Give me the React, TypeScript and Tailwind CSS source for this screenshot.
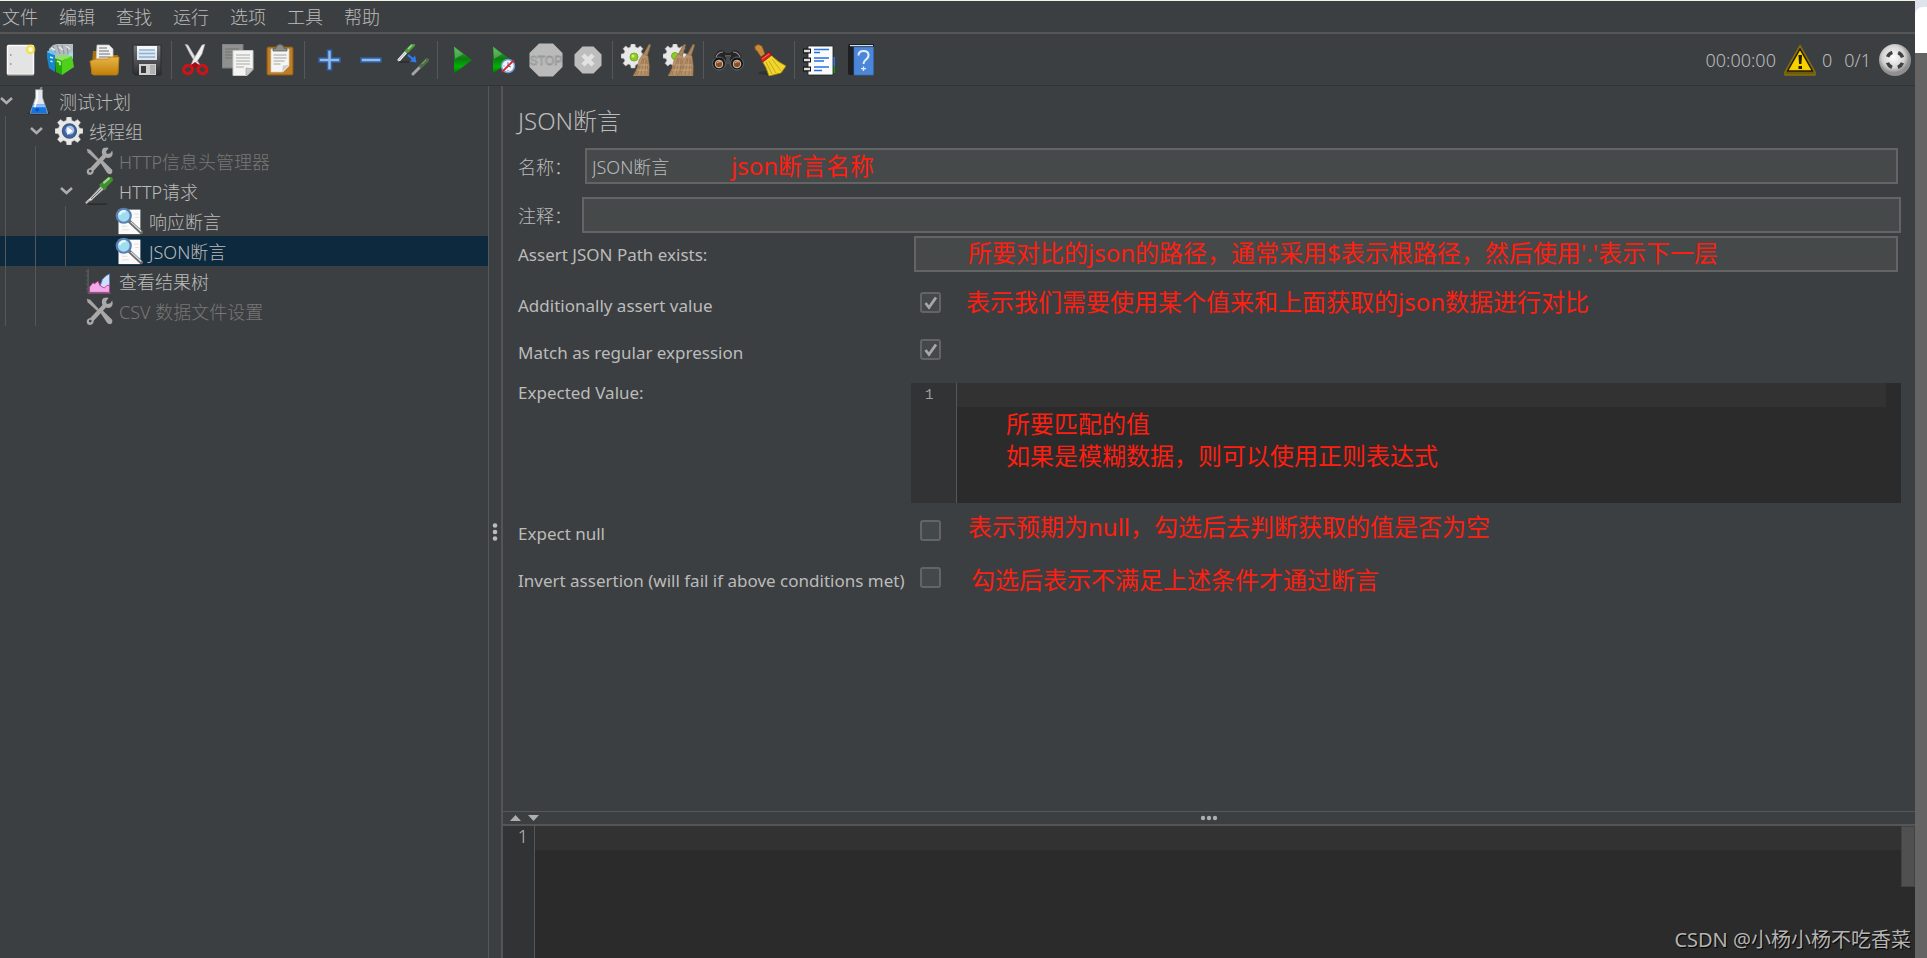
import { useState, type ReactNode } from "react";
import clsx from "clsx";

const menus = ["文件", "编辑", "查找", "运行", "选项", "工具", "帮助"];

function Svg({ size = 32, children }: { size?: number; children: ReactNode }) {
  return (
    <svg width={size} height={size} viewBox="0 0 32 32" fill="none" aria-hidden="true" className="shrink-0">
      {children}
    </svg>
  );
}

function NewIcon() {
  return (
    <Svg>
      <defs>
        <radialGradient id="glow">
          <stop offset="0" stopColor="#fffef0" />
          <stop offset="0.35" stopColor="#fff9b0" />
          <stop offset="0.6" stopColor="#f0dc3c" />
          <stop offset="1" stopColor="#f0dc3c" stopOpacity="0" />
        </radialGradient>
      </defs>
      <rect x="2.5" y="1.500" width="26" height="29" rx="1" fill="#e4e4e4" stroke="#fafafa" strokeWidth="1.500" />
      <path d="M2 31h27" stroke="#8a8a84" />
      <path d="M5 11h1.500M5 20h1.500" stroke="#8c8c8c" strokeWidth="1.500" />
      <circle cx="25.500" cy="5.500" r="5.500" fill="url(#glow)" />
    </Svg>
  );
}

function TemplatesIcon() {
  return (
    <Svg>
      <path d="M2 5l4-4 4-1h16v15H3z" fill="#b4bdc1" />
      <path d="M6 2l3 8M10 1l3 9M15 1l2 9M20 1l1 9" stroke="#8f999e" strokeWidth="1.200" />
      <path d="M4 4l4 2M12 3l4 3M19 2l4 3" stroke="#e4eaec" strokeWidth="1.500" />
      <path d="M22 9l4-1v6l-4 1z" fill="#a9d7ec" />
      <path d="M-1 8l9 3v17l-6-4z" fill="#1587cf" />
      <path d="M-1 8l4-2 7 3-2 2z" fill="#6fc4f0" />
      <path d="M3 13l3 1M3.500 17l2 .8" stroke="#d5efff" strokeWidth="1.400" />
      <path d="M8 14l7 3v14l-6-3z" fill="#27a80a" />
      <path d="M8 14l7-3 10 1-10 5z" fill="#8be45c" />
      <path d="M15 17l10-5 2 11-12 8z" fill="#4fd01c" />
      <path d="M10 17l3 1.200v3" stroke="#d3f8c2" strokeWidth="1.500" />
    </Svg>
  );
}

function OpenIcon() {
  return (
    <Svg>
      <defs>
        <linearGradient id="folder" x1="0" y1="0" x2="0" y2="1">
          <stop offset="0" stopColor="#e9b545" />
          <stop offset="1" stopColor="#c07f08" />
        </linearGradient>
      </defs>
      <path d="M4 7h6l1 4h18l1 7-1 12H2z" fill="#a8700d" />
      <path d="M8 1h12l4 4v13H7z" fill="#f2f2f2" stroke="#c6c6c6" strokeWidth=".7" />
      <path d="M10 4h8M10 7h10M10 10h11M10 13h11" stroke="#9c9c9c" strokeWidth="1.400" />
      <path d="M1 17l6-2h12l2-2h9l-1 16q0 2-2 2H5q-2 0-2-2z" fill="url(#folder)" stroke="#b97a0a" strokeWidth=".8" />
    </Svg>
  );
}

function SaveIcon() {
  return (
    <Svg>
      <defs>
        <linearGradient id="disk" x1="0" y1="0" x2="0" y2="1">
          <stop offset="0" stopColor="#77777c" />
          <stop offset="1" stopColor="#2c2d31" />
        </linearGradient>
      </defs>
      <path d="M2 1h28v30H4l-2-2z" fill="url(#disk)" stroke="#2a2a2c" />
      <path d="M6 2h20v14H6z" fill="#dce9f5" />
      <path d="M6 2h20v5H6z" fill="#f2f7fc" />
      <path d="M8 6h16M8 9.500h16M8 13h16" stroke="#8fb0cf" strokeWidth="1.500" />
      <path d="M8 20h17v11H8z" fill="#cfcfcf" />
      <path d="M10 22h5v7h-5z" fill="#38383a" />
      <path d="M19 21h5v9h-5z" fill="#b0b0b0" />
    </Svg>
  );
}

function CutIcon() {
  return (
    <Svg>
      <path d="M5 0l3 1 9 15 3 5-4-1q-3-5-6-10z" fill="#e2e2e2" stroke="#9a9a9a" strokeWidth=".6" />
      <path d="M25 0l-3 1-9 15-2 5 4-1q4-5 7-10z" fill="#f1f1f1" stroke="#9a9a9a" strokeWidth=".6" />
      <ellipse cx="8" cy="25.500" rx="4.500" ry="4" stroke="#cf1218" strokeWidth="3.200" transform="rotate(-28 8 25.500)" />
      <ellipse cx="22.500" cy="25.500" rx="4.500" ry="4" stroke="#cf1218" strokeWidth="3.200" transform="rotate(28 22.500 25.500)" />
      <path d="M11 21l4-3 4 3-4 3z" fill="#a50c12" />
    </Svg>
  );
}

function CopyIcon() {
  return (
    <Svg>
      <path d="M0 0h21v24H0z" fill="#8f9090" stroke="#7a7a7a" />
      <path d="M3 5h14M3 8h14M3 11h14M3 14h8" stroke="#727272" />
      <path d="M11 6.500h20v19l-6 6H11z" fill="#f4f4f2" stroke="#c8c8c8" />
      <path d="M14 11h14M14 14h14M14 17h14M14 20h14M14 23h8" stroke="#a9a9a9" strokeWidth="1.200" />
      <path d="M31 25l-7-1v7z" fill="#c9c9c6" stroke="#9a9a98" strokeWidth=".6" />
    </Svg>
  );
}

function PasteIcon() {
  return (
    <Svg>
      <rect x="3" y="3" width="26" height="28" rx="1.500" fill="#c07e22" stroke="#8a5711" />
      <path d="M7 5h18v17l-6 6H7z" fill="#f5f5f3" stroke="#d0d0d0" strokeWidth=".7" />
      <path d="M9.500 11h13M9.500 14h13M9.500 17h11M9.500 20h7" stroke="#a4a4a4" strokeWidth="1.200" />
      <path d="M25 21l-6 .5-1 6.500z" fill="#cdcdca" />
      <path d="M9 7V4.500h3Q12 .5 16 .5t4 4h3V7z" fill="#8b8d88" stroke="#5f615c" strokeWidth=".8" />
    </Svg>
  );
}

function PlusIcon() {
  return (
    <Svg>
      <path d="M14.500 6h4v8h8.500v4h-8.500v8h-4v-8H6v-4h8.500z" fill="#92b8e6" stroke="#2c62a8" strokeWidth="1.500" />
    </Svg>
  );
}

function MinusIcon() {
  return (
    <Svg>
      <rect x="6" y="14" width="20" height="4" fill="#92b8e6" stroke="#2c62a8" strokeWidth="1.500" />
    </Svg>
  );
}

function ToggleIcon() {
  return (
    <Svg>
      <path d="M2 16l8-9" stroke="#f0f0ee" strokeWidth="3" strokeLinecap="round" />
      <path d="M1 17l7-8" stroke="#9b9b98" strokeWidth=".8" />
      <path d="M10 7l6-6" stroke="#4f9a3c" strokeWidth="4" strokeLinecap="round" />
      <path d="M11 5l4-4" stroke="#a6dc96" strokeWidth="1.200" />
      <path d="M2 18h10" stroke="#2b2d2e" strokeWidth="1.500" />
      <path d="M11 11l6 5" stroke="#2f7cf0" strokeWidth="2.200" />
      <path d="M19.500 18.500l-1.500-7-5 6z" fill="#2f7cf0" />
      <path d="M16 30l8-8" stroke="#a5a6a4" strokeWidth="3" strokeLinecap="round" />
      <path d="M24 22l6-6" stroke="#4c7044" strokeWidth="4" strokeLinecap="round" />
      <path d="M25 20l4-4" stroke="#86a67c" strokeWidth="1" />
    </Svg>
  );
}

function PlayShape({ id }: { id: string }) {
  return (
    <>
      <defs>
        <linearGradient id={id} x1="0" y1="0" x2="0" y2="1">
          <stop offset="0" stopColor="#4fae4f" />
          <stop offset="0.45" stopColor="#0d7a12" />
          <stop offset="0.75" stopColor="#00b400" />
          <stop offset="1" stopColor="#056b08" />
        </linearGradient>
      </defs>
      <path d="M8 2.500L26 16 8 29.500z" fill={`url(#${id})`} />
      <path d="M9 4l8 6-8 5z" fill="#8ccf8c" opacity=".45" />
    </>
  );
}

function StartIcon() {
  return (
    <Svg>
      <PlayShape id="start" />
    </Svg>
  );
}

function StartNoPauseIcon() {
  return (
    <Svg>
      <g transform="translate(-3 0)">
        <PlayShape id="start-no-pause" />
      </g>
      <circle cx="20" cy="22" r="6.500" fill="#f4f8ff" stroke="#6f9cd8" strokeWidth="1.500" />
      <path d="M20 18v4l3 1M15.500 22h1M20 26v1" stroke="#4a74ac" />
      <path d="M14 28L26 16" stroke="#d3262b" strokeWidth="1.800" />
    </Svg>
  );
}

function StopIcon() {
  return (
    <svg width="34" height="34" viewBox="0 0 34 34" aria-hidden="true">
      <path d="M10 .5h14L33.500 10v14L24 33.500H10L.5 24V10z" fill="#bababa" />
      <text
        x="17"
        y="21.500"
        textAnchor="middle"
        fontSize="12"
        fontFamily="Liberation Sans, sans-serif"
        fill="#d6d6d6"
        stroke="#989898"
        strokeWidth=".8"
      >
        STOP
      </text>
    </svg>
  );
}

function ShutdownIcon() {
  return (
    <Svg>
      <path d="M10.500 2.500h11l8 8v11l-8 8h-11l-8-8v-11z" fill="#bdbdbd" />
      <path d="M11 11l10 10M21 11L11 21" stroke="#e2e2e2" strokeWidth="4.500" />
    </Svg>
  );
}

function GearShape() {
  return (
    <g transform="scale(.75)">
      <path
        d="M13.500 0h5l.8 4 3 1.200 3.500-2.400 3.400 3.400-2.400 3.500 1.200 3 4 .8v5l-4 .8-1.200 3 2.400 3.500-3.400 3.400-3.500-2.400-3 1.200-.8 4h-5l-.8-4-3-1.200-3.500 2.400-3.400-3.400 2.400-3.500-1.200-3-4-.8v-5l4-.8 1.200-3-2.400-3.500 3.400-3.400 3.500 2.400 3-1.200z"
        fill="#e8e8e8"
        stroke="#bcbcbc"
        strokeWidth=".8"
      />
    </g>
  );
}

function BroomHead({ x }: { x: number }) {
  return (
    <g transform={`translate(${x} 0)`}>
      <path d="M18 0l2 .8-4 12-4-2z" fill="#a98762" stroke="#6c5134" strokeWidth=".6" />
      <path d="M12 10l5 2q2 10 1 20H2q5-8 6-16z" fill="#b8926a" stroke="#8a6a45" strokeWidth=".5" />
      <path d="M12 14l-6 17M13 14l-3 17M15 14l-1 17M16 16l1 15M9 20l-5 11" stroke="#8f6e49" strokeWidth=".7" />
      <path d="M8 21h9M6 26h11" stroke="#d2b18c" strokeWidth=".7" />
    </g>
  );
}

function ClearIcon() {
  return (
    <Svg>
      <GearShape />
      <circle cx="13" cy="13" r="4" fill="#8ccc22" stroke="#7ba52e" />
      <circle cx="12" cy="12" r="1.500" fill="#cdf07a" />
      <BroomHead x={10} />
    </Svg>
  );
}

function ClearAllIcon() {
  return (
    <Svg>
      <GearShape />
      <circle cx="12" cy="12" r="3.500" fill="#8ccc22" stroke="#7ba52e" />
      <BroomHead x={3} />
      <BroomHead x={12} />
    </Svg>
  );
}

function SearchIcon() {
  return (
    <Svg>
      <path d="M2 15Q4 6 10 6l4 3h4l4-3q6 0 8 9v4H2z" fill="#252525" />
      <path d="M4 13q2-5 7-5M21 8q5 0 7 5M13 12h6" stroke="#8f8f8f" strokeWidth="1.200" />
      <path d="M14 12h4v8h-4z" fill="#4a4a4a" />
      <circle cx="7" cy="19.500" r="6.500" fill="#171717" stroke="#646464" />
      <circle cx="25" cy="19.500" r="6.500" fill="#171717" stroke="#646464" />
      <circle cx="7" cy="20" r="3.800" fill="#8b4d22" stroke="#c9c9c9" />
      <circle cx="25" cy="20" r="3.800" fill="#8b4d22" stroke="#c9c9c9" />
      <path d="M5 19q2-2 4-1M23 19q2-2 4-1" stroke="#e4a070" strokeWidth="1.200" />
    </Svg>
  );
}

function SearchResetIcon() {
  return (
    <Svg>
      <ellipse cx="16" cy="29" rx="12" ry="2" fill="#2f3132" />
      <path d="M1 2q3-3 7 0l3 8-4 3-4-6Q0 6 1 2z" fill="#c98a3a" stroke="#7e4f15" strokeWidth=".8" />
      <path d="M7 15l8-6 4 4q5 5 13 9l-5 7-12 3q-2-8-8-17z" fill="#f0d62c" stroke="#a58a0c" strokeWidth=".8" />
      <path d="M12 18l6 12M15 17l7 12M18 15l9 12" stroke="#c2a516" strokeWidth=".9" />
      <path d="M6 15l9-7 3 3-9 7z" fill="#d6201c" stroke="#8f0f0d" strokeWidth=".6" />
      <path d="M8 15l7-5" stroke="#ff8f80" strokeWidth=".8" />
    </Svg>
  );
}

function FunctionIcon() {
  return (
    <Svg>
      <path d="M25 13h7v9h-7z" fill="#2f76e8" />
      <path d="M25 22h7v7h-7z" fill="#159312" />
      <path d="M5 2h25v29H5z" fill="#fbfbfb" stroke="#1f1f1f" strokeWidth=".8" />
      <path d="M11 5.500h15M11 8.500h6M11 14h15M11 17h10M11 23h15M11 26.500h8" stroke="#2570e0" strokeWidth="1.700" />
      <path d="M0 7h8M0 16h8M0 25h8" stroke="#151515" strokeWidth="5" />
      <path d="M1 7h6M1 16h6M1 25h6" stroke="#dcdcdc" strokeWidth="2.500" />
    </Svg>
  );
}

function HelpIcon() {
  return (
    <Svg>
      <path d="M3 2q0-2 2-2h24v31H5q-2 0-2-2z" fill="#1d1f22" />
      <path d="M5 1h23v1.200H5z" fill="#d9dee6" />
      <path d="M9 3h19.500v28H9z" fill="#4b86d8" stroke="#3a6fbd" strokeWidth=".7" />
      <path d="M13.500 11.500q0-4.500 5-4.500t5 4q0 3-3 5-2 1.500-2 4" stroke="#e3edfb" strokeWidth="2" />
      <path d="M18.500 22.500v4.500M16 24.700h5" stroke="#e3edfb" strokeWidth="1.300" />
    </Svg>
  );
}

function WarningIcon() {
  return (
    <Svg>
      <path d="M16 1.500L31 28v3H1v-3z" fill="#6f5b08" stroke="#84700f" strokeWidth="1.500" strokeLinejoin="round" />
      <path d="M16 5l12.500 22h-25z" fill="#f7d000" stroke="#221d05" strokeWidth="1.500" strokeLinejoin="round" />
      <path d="M14.500 11h3.500l-.6 9h-2.300z" fill="#1d1a08" />
      <path d="M14.500 22h3.500v3h-3.500z" fill="#1d1a08" />
    </Svg>
  );
}

function TargetIcon() {
  return (
    <Svg>
      <defs>
        <radialGradient id="ball" cx=".45" cy=".4">
          <stop offset="0" stopColor="#ffffff" />
          <stop offset="0.7" stopColor="#d2d2d2" />
          <stop offset="1" stopColor="#8f8f8f" />
        </radialGradient>
      </defs>
      <circle cx="16" cy="16" r="16" fill="url(#ball)" />
      <circle cx="16" cy="16" r="8" stroke="#3f4142" strokeWidth="3.500" strokeDasharray="6.600 5.966" strokeDashoffset="-3" />
    </Svg>
  );
}

// ---- tree icons ----

function PlanIcon() {
  return (
    <Svg size={28}>
      <ellipse cx="16" cy="30" rx="13" ry="1.500" fill="#25282a" />
      <path d="M17 4l2-4" stroke="#8d9091" strokeWidth="2" />
      <path d="M12 3h8v9l6 18H6l6-18z" fill="#dfe5ea" stroke="#9aa1a7" strokeWidth=".8" />
      <path d="M9.500 20h13l3 10H6.500z" fill="#1173e6" />
      <path d="M9.500 20h13l1 3H8.500z" fill="#8cbdf5" />
      <path d="M14 4v10l-3 9" stroke="#ffffff" strokeWidth="2" />
      <circle cx="14" cy="26" r="2" fill="#0b4fb0" />
    </Svg>
  );
}

function ThreadGroupIcon() {
  return (
    <Svg size={28}>
      <path
        d="M13.500 0h5l.8 4 3 1.200 3.500-2.400 3.400 3.400-2.400 3.500 1.200 3 4 .8v5l-4 .8-1.200 3 2.400 3.500-3.400 3.400-3.500-2.400-3 1.200-.8 4h-5l-.8-4-3-1.200-3.500 2.400-3.400-3.400 2.400-3.500-1.200-3-4-.8v-5l4-.8 1.200-3-2.400-3.500 3.400-3.400 3.500 2.400 3-1.200z"
        fill="#e8e8e6"
        stroke="#b5b5b2"
        strokeWidth=".6"
      />
      <circle cx="16.500" cy="16" r="8" fill="#3e66a6" stroke="#3b5885" strokeWidth="1.500" />
      <circle cx="17" cy="15" r="5" fill="#a9c1e4" />
      <path d="M14 11.500l6.500 4.500-6.500 4.500z" fill="#ffffff" />
    </Svg>
  );
}

function ToolsIcon() {
  return (
    <Svg size={28}>
      <path d="M2 2l4 1 10 11-2 2L3 6z" fill="#a5a5a5" />
      <path d="M17 17l3-2 11 11q1 4-2 5-3 0-4-2z" fill="#a9a9a9" />
      <path d="M21 1q5-1 6 0l-3 4 1 3 4-1 2-3q2 6-2 8-3 1-5 0L10 27q0 4-4 5-4 0-4-4 0-3 4-4L20 9q-2-5 1-8z" fill="#a9a9a9" />
      <circle cx="6" cy="27.500" r="1.500" fill="#3c3f41" />
    </Svg>
  );
}

function SamplerIcon() {
  return (
    <Svg size={28}>
      <path d="M3 31h22" stroke="#26282a" strokeWidth="1.500" />
      <path d="M2 28L19 10l3 3L7 27z" fill="#e9ece9" stroke="#8c8f8c" strokeWidth="1" />
      <path d="M7 25l12-12" stroke="#6d706d" strokeWidth="1.200" />
      <path d="M1 30l4-4" stroke="#b5b8b5" strokeWidth="2.500" />
      <path d="M18 7l2-1 7-6 4 0 1 4-7 7-1 3-2 1-6-6z" fill="#3f8f2e" />
      <path d="M21 7l7-6" stroke="#9ddc84" strokeWidth="2.500" />
    </Svg>
  );
}

function AssertionIcon() {
  return (
    <Svg size={28}>
      <path d="M4 3h25v28H4z" fill="#fafafa" />
      <path d="M8 26h8M8 22h6M22 8h5M23 12h4" stroke="#dcdcdc" />
      <path d="M16 16l14 13" stroke="#6b6b6b" strokeWidth="4" strokeLinecap="round" />
      <path d="M18 17l12 11" stroke="#dcdcdc" strokeWidth="1.500" />
      <circle cx="10" cy="10" r="8" fill="#9fdcf2" stroke="#5a7fae" strokeWidth="2.500" />
      <path d="M5 9q2-5 7-4" stroke="#e8faff" strokeWidth="2.500" />
    </Svg>
  );
}

function ResultTreeIcon() {
  return (
    <Svg size={28}>
      <path d="M3.500 2v28h26" stroke="#6c6f70" />
      <path d="M1 5h2M1 10h2M1 15h2M1 20h2M1 25h2" stroke="#5c5f60" />
      <path d="M15 28l5-14 4-4 4-2v21z" fill="#cfe0fa" stroke="#5a7fc4" />
      <path d="M5 29v-6l4-5 2 1 4-3 2 5 5 3 3-3h3v8z" fill="#f2a9ea" stroke="#b8338e" />
    </Svg>
  );
}

const toolbarGroups = [
  [
    { label: "新建", icon: <NewIcon /> },
    { label: "模板", icon: <TemplatesIcon /> },
    { label: "打开", icon: <OpenIcon /> },
    { label: "保存", icon: <SaveIcon /> },
  ],
  [
    { label: "剪切", icon: <CutIcon /> },
    { label: "复制", icon: <CopyIcon /> },
    { label: "粘贴", icon: <PasteIcon /> },
  ],
  [
    { label: "全部展开", icon: <PlusIcon /> },
    { label: "全部折叠", icon: <MinusIcon /> },
    { label: "切换", icon: <ToggleIcon /> },
  ],
  [
    { label: "启动", icon: <StartIcon /> },
    { label: "不停顿开始", icon: <StartNoPauseIcon /> },
    { label: "停止", icon: <StopIcon /> },
    { label: "关闭", icon: <ShutdownIcon /> },
  ],
  [
    { label: "清除", icon: <ClearIcon /> },
    { label: "清除全部", icon: <ClearAllIcon /> },
  ],
  [
    { label: "搜索", icon: <SearchIcon /> },
    { label: "重置搜索", icon: <SearchResetIcon /> },
  ],
  [
    { label: "函数助手", icon: <FunctionIcon /> },
    { label: "帮助", icon: <HelpIcon /> },
  ],
];

function Toolbar() {
  return (
    <div className="flex h-[52px] shrink-0 items-center border-b border-[#323232]">
      {toolbarGroups.map((group, i) => (
        <div key={i} className="flex items-center">
          {i > 0 && <span className="mx-[3px] h-[38px] w-px bg-[#555759]" />}
          {group.map((item) => (
            <button key={item.label} aria-label={item.label} className="flex h-9 w-[42px] items-center justify-center">
              {item.icon}
            </button>
          ))}
        </div>
      ))}
      <div className="ml-auto flex items-center pr-1">
        <span>00:00:00</span>
        <button aria-label="日志" className="ml-2 flex items-center gap-1.5">
          <WarningIcon />
          <span>0</span>
        </button>
        <span className="mr-2 ml-3">0/1</span>
        <TargetIcon />
      </div>
    </div>
  );
}

interface TreeNode {
  label: string;
  icon: ReactNode;
  level: number;
  open?: boolean;
  disabled?: boolean;
}

const nodes: TreeNode[] = [
  { label: "测试计划", icon: <PlanIcon />, level: 0, open: true },
  { label: "线程组", icon: <ThreadGroupIcon />, level: 1, open: true },
  { label: "HTTP信息头管理器", icon: <ToolsIcon />, level: 2, disabled: true },
  { label: "HTTP请求", icon: <SamplerIcon />, level: 2, open: true },
  { label: "响应断言", icon: <AssertionIcon />, level: 3 },
  { label: "JSON断言", icon: <AssertionIcon />, level: 3 },
  { label: "查看结果树", icon: <ResultTreeIcon />, level: 2 },
  { label: "CSV 数据文件设置", icon: <ToolsIcon />, level: 2, disabled: true },
];

function Tree() {
  const [selected, setSelected] = useState("JSON断言");

  return (
    <ul role="tree" className="w-[489px] shrink-0 border-r border-[#555759]">
      {nodes.map((node) => (
        <li
          key={node.label}
          role="treeitem"
          aria-selected={node.label === selected}
          onClick={() => setSelected(node.label)}
          className={clsx(
            "flex h-[30px] cursor-default items-center",
            node.label === selected && "bg-[#0d293e]",
            node.disabled && "text-[#777777]"
          )}
        >
          {Array.from({ length: node.level }, (_, i) => (
            <span key={i} className="flex w-[30px] shrink-0 self-stretch pl-[5px]">
              <span className="w-px bg-[#555759]" />
            </span>
          ))}
          <span className="w-[25px] shrink-0">
            {node.open && (
              <svg width="14" height="10" viewBox="0 0 14 10" fill="none" aria-hidden="true">
                <path d="M1 2l5.500 5L12 2" stroke="#adadad" strokeWidth="2.500" />
              </svg>
            )}
          </span>
          {node.icon}
          <span className="ml-1.5 pt-0.5 whitespace-nowrap">{node.label}</span>
        </li>
      ))}
    </ul>
  );
}

function CheckRow({ id, label, defaultChecked }: { id: string; label: string; defaultChecked?: boolean }) {
  return (
    <div className="flex h-[47px] items-center">
      <label htmlFor={id} className="w-[402px] shrink-0 pt-0.5 text-[17px] font-normal">
        {label}
      </label>
      <span className="mb-1 grid size-[21px] place-items-center">
        <input
          id={id}
          type="checkbox"
          defaultChecked={defaultChecked}
          className="peer col-start-1 row-start-1 size-[21px] appearance-none rounded-[3px] border-2 border-[#646464] bg-[#43494a]"
        />
        <svg
          viewBox="0 0 14 14"
          fill="none"
          aria-hidden="true"
          className="pointer-events-none invisible col-start-1 row-start-1 size-3.5 peer-checked:visible"
        >
          <path d="M1.500 7l3.500 4.500L12 1.500" stroke="#a7a7a7" strokeWidth="2.800" />
        </svg>
      </span>
    </div>
  );
}

// red remarks written over the form
const remarks = [
  { text: "json断言名称", place: "left-[228px] top-[64px]" },
  { text: "所要对比的json的路径，通常采用$表示根路径，然后使用'.'表示下一层", place: "left-[465px] top-[151px]" },
  { text: "表示我们需要使用某个值来和上面获取的json数据进行对比", place: "left-[463px] top-[200px]" },
  { text: "所要匹配的值\n如果是模糊数据，则可以使用正则表达式", place: "left-[503px] top-[322px]" },
  { text: "表示预期为null，勾选后去判断获取的值是否为空", place: "left-[465px] top-[425px]" },
  { text: "勾选后表示不满足上述条件才通过断言", place: "left-[468px] top-[478px]" },
];

const fieldClass = "h-9 min-w-0 flex-1 border-2 border-[#646464] bg-[#45494a] px-[5px] outline-none";

function AssertionForm() {
  return (
    <form className="relative flex-1 overflow-hidden pt-5 pr-3.5 pl-[15px]">
      <h1 className="text-2xl leading-[30px]">JSON断言</h1>
      <div className="mt-3 mr-[3px] flex items-center">
        <label htmlFor="name" className="w-[67px] shrink-0 pt-0.5">
          名称：
        </label>
        <input id="name" defaultValue="JSON断言" className={fieldClass} />
      </div>
      <div className="mt-[13px] flex items-center">
        <label htmlFor="comment" className="w-16 shrink-0 pt-0.5">
          注释：
        </label>
        <input id="comment" className={fieldClass} />
      </div>
      <div className="mt-[3px] mr-[3px] mb-[9px] flex items-center">
        <label htmlFor="path" className="w-[396px] shrink-0 pt-0.5 text-[17px] font-normal">
          Assert JSON Path exists:
        </label>
        <input id="path" className={fieldClass} />
      </div>
      <CheckRow id="assert-value" label="Additionally assert value" defaultChecked />
      <CheckRow id="regex" label="Match as regular expression" defaultChecked />
      <div className="mt-2 mb-1.5 flex">
        <label htmlFor="expected" className="w-[393px] shrink-0 text-[17px] leading-5 font-normal">
          Expected Value:
        </label>
        <div className="flex h-[120px] flex-1 bg-[#2b2b2b]">
          <span className="w-[46px] shrink-0 border-r border-[#555759] bg-[#313335] pl-3.5 font-['Liberation_Mono',monospace] text-sm leading-6 text-[#a0a0a0]">
            1
          </span>
          <textarea
            id="expected"
            className="mr-[15px] flex-1 resize-none bg-linear-to-b from-[#323232] from-[24px] to-[#2b2b2b] to-[24px] leading-6 outline-none"
          />
        </div>
      </div>
      <CheckRow id="expect-null" label="Expect null" />
      <CheckRow id="invert" label="Invert assertion (will fail if above conditions met)" />
      {remarks.map((remark) => (
        <p
          key={remark.text}
          className={clsx(
            "pointer-events-none absolute text-2xl leading-8 font-normal whitespace-pre text-[#ff1e10]",
            remark.place
          )}
        >
          {remark.text}
        </p>
      ))}
    </form>
  );
}

function LogPanel() {
  return (
    <section className="shrink-0">
      <div className="grid h-[15px] grid-cols-[1fr_auto_1fr] items-center border-t border-b-2 border-t-[#555759] border-b-[#555555]">
        <svg width="30" height="8" viewBox="0 0 30 8" fill="#adadad" aria-hidden="true" className="ml-[7px]">
          <path d="M0 7l5.500-6L11 7zM18 1h11l-5.500 6z" />
        </svg>
        <svg width="18" height="6" viewBox="0 0 18 6" fill="#adadad" aria-hidden="true">
          <circle cx="3" cy="3" r="2.200" />
          <circle cx="9" cy="3" r="2.200" />
          <circle cx="15" cy="3" r="2.200" />
        </svg>
      </div>
      <div className="flex h-[132px] bg-[#2b2b2b]">
        <span className="w-8 shrink-0 border-r border-[#555759] bg-[#313335] pt-0.5 pr-1.5 text-right leading-4">1</span>
        <textarea
          readOnly
          aria-label="日志"
          className="flex-1 resize-none bg-linear-to-b from-[#323232] from-[24px] to-[#2b2b2b] to-[24px] leading-6 outline-none"
        />
        <span className="h-[61px] w-3.5 border border-[#434343] bg-[#505050]" />
      </div>
    </section>
  );
}

export default function App() {
  return (
    <div className="flex h-screen bg-[#646464] font-['Noto_Sans','Noto_Sans_CJK_SC',sans-serif] text-lg leading-6 font-light text-[#bbbbbb]">
      <div className="relative flex min-w-0 flex-1 flex-col border-t border-[#f0f4e4] bg-[#3c3f41]">
        <nav className="flex h-[33px] shrink-0 items-center gap-[21px] border-b-2 border-[#555555] pl-0.5">
          {menus.map((menu) => (
            <button key={menu}>{menu}</button>
          ))}
        </nav>
        <Toolbar />
        <main className="flex min-h-0 flex-1">
          <Tree />
          <div className="flex w-3 shrink-0 items-center justify-center pt-5">
            <svg width="6" height="20" viewBox="0 0 6 20" fill="#bbbbbb" aria-hidden="true">
              <circle cx="3" cy="3.500" r="2.300" />
              <circle cx="3" cy="10" r="2.300" />
              <circle cx="3" cy="16.500" r="2.300" />
            </svg>
          </div>
          <div className="flex min-w-0 flex-1 flex-col border-l-2 border-[#555555]">
            <AssertionForm />
            <LogPanel />
          </div>
        </main>
        <p className="pointer-events-none absolute right-1 bottom-1 text-xl leading-7 font-normal text-[#b4b4b4] [text-shadow:1px_1px_1px_#000]">
          CSDN @小杨小杨不吃香菜
        </p>
      </div>
      <div className="w-3 shrink-0">
        <div className="h-[53px] bg-[#dfe3ec] pt-[7px]">
          <div className="h-full rounded-tl-lg bg-white" />
        </div>
      </div>
    </div>
  );
}
